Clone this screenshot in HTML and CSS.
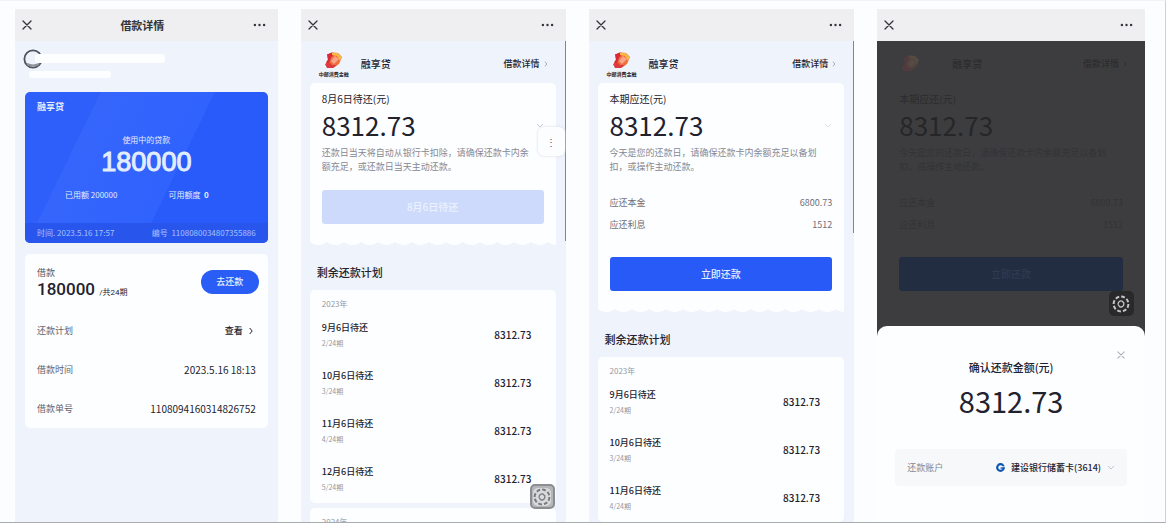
FILE: index.html
```html
<!DOCTYPE html>
<html lang="zh-CN">
<head>
<meta charset="utf-8">
<title>借款详情</title>
<link rel="stylesheet" href="styles.css">
</head>
<body>
<svg class="defs" aria-hidden="true">
  <defs>
    <symbol id="close" viewBox="0 0 10 10"><path d="M1 1 9 9M9 1 1 9" fill="none" stroke="currentColor" stroke-width="1.3" stroke-linecap="round"/></symbol>
    <symbol id="more" viewBox="0 0 12 4"><circle cx="1.4" cy="2" r="1.2"/><circle cx="6" cy="2" r="1.2"/><circle cx="10.6" cy="2" r="1.2"/></symbol>
    <symbol id="right" viewBox="0 0 4 8"><path d="M.7 1 3.2 4 .7 7" fill="none" stroke="currentColor"/></symbol>
    <symbol id="down" viewBox="0 0 8 5"><path d="M1 1 4 4 7 1" fill="none" stroke="currentColor"/></symbol>
    <symbol id="brand" viewBox="0 0 20 18">
      <path d="M3 2.500 8 .5 14 1l4 4-3 7-6 4-6-1-1-4 2-3z" fill="#f0703c"/>
      <path d="M3 2.500 8 .5l3 1-4 4-2 6-3-1 2-3z" fill="#d9283a"/>
      <path d="M8 .5 14 1l4 4-2 4-3-5-5-1z" fill="#f9b648"/>
      <path d="M1 12 5 10l3 3 5 0-4 3-6 0z" fill="#dc3a40"/>
      <path d="m7 9 4-5 4 3-5 5z" fill="#f8a58c"/>
    </symbol>
    <symbol id="scan" viewBox="0 0 18 18">
      <circle cx="9" cy="9" r="7.4" fill="none" stroke="currentColor" stroke-width="2" stroke-dasharray="3.8 2"/>
      <path d="M6.2 9.8a3 3 0 0 1 4-3.600l2 2M11.800 8.400a3 3 0 0 1-4 3.400l-1.600-2" fill="none" stroke="currentColor" stroke-width="1.3"/>
    </symbol>
  </defs>
</svg>
<main class="board">

  <section class="screen">
    <header class="bar">
      <button class="icon-btn" aria-label="关闭"><svg class="i-close"><use href="#close"/></svg></button>
      <h1 class="bar-title">借款详情</h1>
      <button class="icon-btn" aria-label="更多"><svg class="i-more"><use href="#more"/></svg></button>
    </header>
    <div class="body">
      <div class="user">
        <svg class="avatar" viewBox="0 0 20 20"><circle cx="10" cy="10" r="8.6" fill="#eef2fa" stroke="#4d525c" stroke-width="1.8"/><path d="M4 15q6 3 12 0" fill="none" stroke="#8d919a" stroke-width="2"/></svg>
        <div class="mask mask-name"></div>
        <div class="mask mask-id"></div>
      </div>
      <div class="credit">
        <div class="credit-main">
          <h2 class="credit-name">融享贷</h2>
          <p class="credit-label">使用中的贷款</p>
          <p class="credit-amount">180000</p>
          <div class="credit-pair"><span>已用额 200000</span><span>可用额度&nbsp; <b>0</b></span></div>
        </div>
        <div class="credit-foot"><span>时间. 2023.5.16 17:57</span><span>编号 &nbsp;1108080034807355886</span></div>
      </div>
      <div class="card loan">
        <div class="loan-top">
          <div>
            <p class="loan-label">借款</p>
            <p class="loan-amount">180000 <small>/共24期</small></p>
          </div>
          <button class="pill">去还款</button>
        </div>
        <dl class="facts">
          <div><dt>还款计划</dt><dd><a class="look" href="#plan">查看<svg class="i-right"><use href="#right"/></svg></a></dd></div>
          <div><dt>借款时间</dt><dd>2023.5.16 18:13</dd></div>
          <div><dt>借款单号</dt><dd>1108094160314826752</dd></div>
        </dl>
      </div>
    </div>
  </section>

  <section class="screen">
    <header class="bar">
      <button class="icon-btn" aria-label="关闭"><svg class="i-close"><use href="#close"/></svg></button>
      <button class="icon-btn" aria-label="更多"><svg class="i-more"><use href="#more"/></svg></button>
    </header>
    <div class="body wide">
      <div class="scroll scroll-a"></div>
      <div class="brand">
        <div class="logo"><svg class="i-brand"><use href="#brand"/></svg><span>中邮消费金融</span></div>
        <h2 class="brand-name">融享贷</h2>
        <a class="detail" href="#detail">借款详情<svg class="i-right"><use href="#right"/></svg></a>
      </div>
      <div class="card due">
        <p class="due-label">8月6日待还(元)</p>
        <p class="due-amount">8312.73<svg class="i-down"><use href="#down"/></svg></p>
        <p class="note">还款日当天将自动从银行卡扣除，请确保还款卡内余额充足，或还款日当天主动还款。</p>
        <button class="action" disabled>8月6日待还</button>
      </div>
      <h3 class="plan-title">剩余还款计划</h3>
      <div class="card plan">
        <p class="year">2023年</p>
        <ul class="rows">
          <li><div><p class="when">9月6日待还</p><p class="term">2/24期</p></div><b>8312.73</b></li>
          <li><div><p class="when">10月6日待还</p><p class="term">3/24期</p></div><b>8312.73</b></li>
          <li><div><p class="when">11月6日待还</p><p class="term">4/24期</p></div><b>8312.73</b></li>
          <li><div><p class="when">12月6日待还</p><p class="term">5/24期</p></div><b>8312.73</b></li>
        </ul>
      </div>
      <div class="card plan"><p class="year">2024年</p></div>
      <button class="help" aria-label="帮助">⋮</button>
      <button class="scan" aria-label="识别"><svg class="i-scan"><use href="#scan"/></svg></button>
    </div>
  </section>

  <section class="screen">
    <header class="bar">
      <button class="icon-btn" aria-label="关闭"><svg class="i-close"><use href="#close"/></svg></button>
      <button class="icon-btn" aria-label="更多"><svg class="i-more"><use href="#more"/></svg></button>
    </header>
    <div class="body wide">
      <div class="scroll scroll-b"></div>
      <div class="brand">
        <div class="logo"><svg class="i-brand"><use href="#brand"/></svg><span>中邮消费金融</span></div>
        <h2 class="brand-name">融享贷</h2>
        <a class="detail" href="#detail">借款详情<svg class="i-right"><use href="#right"/></svg></a>
      </div>
      <div class="card due">
        <p class="due-label">本期应还(元)</p>
        <p class="due-amount">8312.73<svg class="i-down faint"><use href="#down"/></svg></p>
        <p class="note">今天是您的还款日，请确保还款卡内余额充足以备划扣，或操作主动还款。</p>
        <dl class="split">
          <div><dt>应还本金</dt><dd>6800.73</dd></div>
          <div><dt>应还利息</dt><dd>1512</dd></div>
        </dl>
        <button class="action">立即还款</button>
      </div>
      <h3 class="plan-title">剩余还款计划</h3>
      <div class="card plan">
        <p class="year">2023年</p>
        <ul class="rows">
          <li><div><p class="when">9月6日待还</p><p class="term">2/24期</p></div><b>8312.73</b></li>
          <li><div><p class="when">10月6日待还</p><p class="term">3/24期</p></div><b>8312.73</b></li>
          <li><div><p class="when">11月6日待还</p><p class="term">4/24期</p></div><b>8312.73</b></li>
        </ul>
      </div>
    </div>
  </section>

  <section class="screen">
    <header class="bar">
      <button class="icon-btn" aria-label="关闭"><svg class="i-close"><use href="#close"/></svg></button>
      <button class="icon-btn" aria-label="更多"><svg class="i-more"><use href="#more"/></svg></button>
    </header>
    <div class="body dark">
      <div class="brand">
        <div class="logo"><svg class="i-brand"><use href="#brand"/></svg></div>
        <h2 class="brand-name">融享贷</h2>
        <a class="detail" href="#detail">借款详情<svg class="i-right"><use href="#right"/></svg></a>
      </div>
      <div class="card due">
        <p class="due-label">本期应还(元)</p>
        <p class="due-amount">8312.73</p>
        <p class="note">今天是您的还款日，请确保还款卡内余额充足以备划扣，或操作主动还款。</p>
        <dl class="split">
          <div><dt>应还本金</dt><dd>6800.73</dd></div>
          <div><dt>应还利息</dt><dd>1512</dd></div>
        </dl>
        <button class="action">立即还款</button>
      </div>
      <div class="sheet">
        <button class="sheet-close" aria-label="关闭"><svg class="i-close"><use href="#close"/></svg></button>
        <h3 class="sheet-title">确认还款金额(元)</h3>
        <p class="sheet-amount">8312.73</p>
        <div class="account">
          <span class="account-label">还款账户</span>
          <button class="bank">
            <svg class="i-bank" viewBox="0 0 10 10"><circle cx="5" cy="5" r="3.7" fill="none" stroke="#0b56b0" stroke-width="2.4"/><path d="M5 4.200h5" stroke="#fff" stroke-width="1"/><path d="M5 5.6h4" stroke="#0b56b0" stroke-width="1.4"/></svg>
            建设银行储蓄卡(3614)
            <svg class="i-down"><use href="#down"/></svg>
          </button>
        </div>
      </div>
      <button class="scan" aria-label="识别"><svg class="i-scan"><use href="#scan"/></svg></button>
    </div>
  </section>
</main>
</body>
</html>
```
FILE: styles.css
```css
* { box-sizing: border-box; margin: 0; padding: 0; }
body {
  background: #fcfdff;
  color: #22222e;
  font: 10px/14px "Noto Sans CJK SC", sans-serif;
  overflow: hidden;
}
button { border: 0; background: none; font: inherit; color: inherit; }
a { color: inherit; text-decoration: none; }
ul { list-style: none; }
svg { display: block; fill: currentColor; flex: none; }
.defs { position: absolute; width: 0; height: 0; }

.board {
  display: grid;
  grid-template-columns: 263fr 265fr 266fr 268fr;
  gap: 23px;
  height: 100vh;
  padding: 8px 20px 0 15px;
  border-top: 1px solid #f1f3f6;
  border-right: 1px solid #cfd1d5;
  border-bottom: 1px solid #a9abaf;
}
.screen { display: flex; flex-direction: column; min-width: 0; min-height: 0; background: #eff3fb; }
.bar {
  display: flex;
  align-items: center;
  justify-content: space-between;
  flex: none;
  height: 32px;
  padding: 0 12px 0 7px;
  background: #efeff1;
  color: #33343a;
}
.bar-title { font-size: 11px; font-weight: 700; }
.icon-btn { display: flex; }
.i-close { width: 10px; height: 10px; }
.i-more { width: 13px; height: 4px; }
.i-right { width: 4px; height: 8px; }
.i-down { width: 8px; height: 5px; color: #c3c6cd; }
.i-down.faint { color: #dfe1e6; }
.i-brand { width: 20px; height: 18px; }
.i-scan { width: 18px; height: 18px; }
.i-bank { width: 9px; height: 9px; }
.body { position: relative; flex: 1; min-height: 0; overflow: hidden; padding: 0 10px; }
.body.wide { padding-left: 9px; }
.card { background: #fdfeff; border-radius: 5px; }

.user { position: relative; height: 51px; }
.avatar { width: 20px; height: 20px; margin-left: -2px; position: absolute; top: 8px; }
.mask { position: absolute; background: #fdfeff; border-radius: 3px; }
.mask-name { left: 10px; top: 13px; width: 130px; height: 9px; }
.mask-id { left: 4px; top: 30px; width: 82px; height: 7px; }

.credit {
  border-radius: 5px;
  overflow: hidden;
  color: #e3edff;
  background: linear-gradient(116deg, #2f5ffa 24%, #3565fb 24%, #3062fd 60%, #295bfb 60%);
}
.credit-main { height: 131px; padding: 8px 12px 0; text-align: center; }
.credit-name { font-size: 9px; font-weight: 700; text-align: left; }
.credit-label { padding-top: 20px; font-size: 8px; line-height: 12px; }
.credit-amount { font: 27px/32px "Liberation Sans", sans-serif; -webkit-text-stroke: 1px currentColor; }
.credit-pair { display: flex; justify-content: space-between; padding: 10px 47px 0 28px; font-size: 8px; line-height: 14px; }
.credit-foot {
  display: flex;
  justify-content: space-between;
  padding: 0 12px;
  font-size: 8px;
  line-height: 20px;
  color: #a9c0ff;
  background: #2856ec;
}

.loan { margin-top: 11px; padding: 13px 12px 0; }
.loan-top { display: flex; justify-content: space-between; padding-bottom: 8px; }
.loan-label { font-size: 9px; line-height: 12px; color: #555762; }
.loan-amount { font: 500 17px/20px Roboto, "Noto Sans CJK SC", sans-serif; }
.loan-amount small { font-size: 8px; font-weight: 400; }
.pill {
  width: 58px;
  height: 24px;
  margin: 3px -3px 0 0;
  border-radius: 12px;
  background: #2a5cf6;
  color: #e9f0ff;
  font-size: 9px;
  font-weight: 500;
}
.facts > div { display: flex; justify-content: space-between; line-height: 39px; font-size: 9px; }
.facts dt { color: #60626d; }
.facts dd { font-size: 10px; }
.look { display: flex; align-items: center; gap: 6px; padding-right: 3px; font-size: 9px; font-weight: 500; }

.brand { display: flex; align-items: center; height: 42px; padding: 4px 8px 0 9px; }
.logo { display: flex; flex-direction: column; align-items: center; width: 30px; font-size: 5px; line-height: 7px; font-weight: 700; }
.logo span { white-space: nowrap; }
.brand-name { flex: 1; padding-left: 12px; font-size: 10px; font-weight: 500; }
.detail { display: flex; align-items: center; gap: 4px; font-size: 9px; font-weight: 500; }
.detail .i-right { color: #8d909b; height: 6px; }

.due { position: relative; padding: 9px 12px 17px; border-radius: 5px 5px 0 0; }
.due::after {
  content: "";
  position: absolute;
  left: 0;
  right: 0;
  top: 100%;
  height: 4px;
  background: radial-gradient(ellipse 9px 4px at 50% 0, #fdfeff 90%, transparent) 0 0 / 17px 4px;
}
.due-label { font-size: 10px; }
.due-amount { display: flex; align-items: center; justify-content: space-between; padding-bottom: 2px; font-size: 26px; line-height: 38px; }
.note { padding-right: 9px; font-size: 9px; line-height: 14px; color: #868892; }
.action {
  display: block;
  width: 100%;
  height: 34px;
  margin-top: 16px;
  border-radius: 3px;
  background: #285af7;
  color: #e4edff;
  font-weight: 500;
}
.action:disabled { background: #cddafb; color: #ecf2ff; }
.split { padding-top: 18px; margin-bottom: 21px; font-size: 9px; line-height: 22px; color: #6d6f7a; }
.split > div { display: flex; justify-content: space-between; }

.plan-title { padding: 23px 7px 10px; font-size: 11px; line-height: 16px; font-weight: 500; }
.plan { padding: 7px 12px 0; margin-bottom: 5px; }
.year { font-size: 8px; line-height: 14px; color: #9698a0; }
.rows li { display: flex; justify-content: space-between; align-items: center; height: 48px; padding-right: 12px; }
.rows b { font-size: 10px; font-weight: 500; }
.when { font-size: 9px; line-height: 16px; font-weight: 500; }
.term { font-size: 7px; line-height: 14px; color: #9698a0; }

.scroll { position: absolute; top: 0; right: 0; width: 1px; background: #85878c; }
.scroll-a { height: 200px; }
.scroll-b { height: 192px; }
.help {
  position: absolute;
  top: 86px;
  right: 1px;
  width: 27px;
  height: 29px;
  border-radius: 6px;
  background: #fcfdff;
  box-shadow: 0 0 3px #d5d9e2;
  color: #55575f;
}
.scan {
  position: absolute;
  right: 11px;
  bottom: 13px;
  display: grid;
  place-items: center;
  width: 25px;
  height: 25px;
  border: 2px solid #8b8d91;
  border-radius: 5px;
  background: #b4b6b9;
  color: #f3f4f5;
}
.scan .i-scan { color: #77797d; background: #d8dadc; border-radius: 5px; }

.dark { background: #3d3d3f; }
.dark .card { background: none; }
.dark .due::after { display: none; }
.dark .brand-name, .dark .due-label { color: #2c2c2e; }
.dark .due-amount { color: #262628; }
.dark .brand-name { padding-left: 26px; }
.dark .detail, .dark .detail .i-right { color: #2c2c2e; }
.dark .logo { opacity: .12; }
.dark .note, .dark .split { color: #333335; }
.dark .action { background: #232d42; color: #303a50; }
.dark .scan { top: 250px; bottom: auto; border-color: #29292b; background: #29292b; }
.dark .scan .i-scan { color: #c4c5c7; background: none; }
.sheet {
  position: absolute;
  left: 0;
  right: 0;
  bottom: 0;
  padding: 33px 18px 36px;
  border-radius: 10px 10px 0 0;
  background: #fdfeff;
  text-align: center;
}
.sheet-close { position: absolute; top: 25px; right: 20px; color: #adb0b7; }
.sheet-close .i-close { width: 8px; height: 8px; }
.sheet-title { font-size: 11px; line-height: 16px; font-weight: 500; }
.sheet-amount { padding-bottom: 24px; font-size: 29px; line-height: 50px; }
.account {
  display: flex;
  align-items: center;
  justify-content: space-between;
  height: 37px;
  padding: 0 12px;
  border-radius: 4px;
  background: #f7f8fa;
}
.account-label { font-size: 9px; color: #858791; }
.bank { display: flex; align-items: center; gap: 6px; font-size: 9px; font-weight: 500; }
```
